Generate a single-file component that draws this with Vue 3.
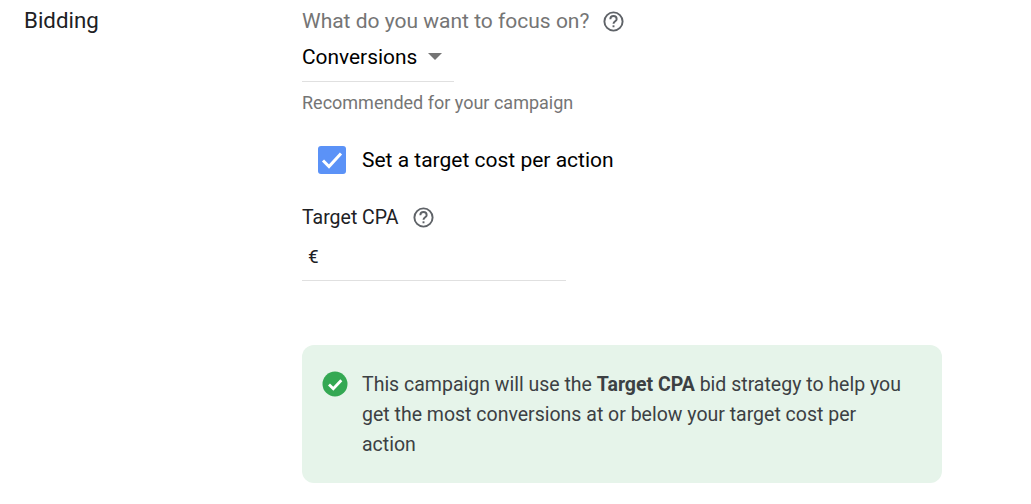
<template>
  <section class="bidding">
    <h2 class="section-title">Bidding</h2>

    <div class="section-body">
      <div class="question">
        <span>What do you want to focus on?</span>
        <svg class="help" viewBox="0 0 24 24">
          <circle cx="12" cy="12" r="9.5" fill="none" stroke="#5f6368" stroke-width="2" />
          <path d="M8.7 9.6a3.3 3.3 0 0 1 6.6 0c0 2.2-3.3 2.3-3.3 4.8" fill="none" stroke="#5f6368" stroke-width="2" />
          <rect x="11" y="16" width="2" height="2" fill="#5f6368" />
        </svg>
      </div>

      <div class="select">
        <span>Conversions</span>
        <i class="caret"></i>
      </div>
      <p class="hint">Recommended for your campaign</p>

      <label class="check-row">
        <span class="checkbox">
          <svg viewBox="0 0 28 28" width="28" height="28">
            <path d="M5 14.5l6 6 12-13" fill="none" stroke="#fff" stroke-width="3" />
          </svg>
        </span>
        <span>Set a target cost per action</span>
      </label>

      <div class="cpa-label">
        <span>Target CPA</span>
        <svg class="help" viewBox="0 0 24 24">
          <circle cx="12" cy="12" r="9.5" fill="none" stroke="#5f6368" stroke-width="2" />
          <path d="M8.7 9.6a3.3 3.3 0 0 1 6.6 0c0 2.2-3.3 2.3-3.3 4.8" fill="none" stroke="#5f6368" stroke-width="2" />
          <rect x="11" y="16" width="2" height="2" fill="#5f6368" />
        </svg>
      </div>
      <div class="cpa-input">€</div>

      <div class="notice">
        <svg class="notice-icon" viewBox="0 0 26 26" width="26" height="26">
          <circle cx="13" cy="13" r="12.5" fill="#34a853" />
          <path d="M7 13.5l4.3 4.3 8-8.6" fill="none" stroke="#fff" stroke-width="2.8" />
        </svg>
        <p>This campaign will use the <strong>Target CPA</strong> bid strategy to help you get the most conversions at or below your target cost per action</p>
      </div>
    </div>
  </section>
</template>

<script setup>
</script>

<style>
html, body {
  background: #fff;
}
</style>

<style scoped>
.bidding {
  display: flex;
  width: 1031px;
  height: 504px;
  overflow: hidden;
  box-sizing: border-box;
  padding: 8px 0 0 24px;
  font-family: Roboto, "Liberation Sans", sans-serif;
  color: #202124;
}

.section-title {
  width: 278px;
  flex-shrink: 0;
  margin: 0;
  font-size: 22.3px;
  font-weight: 400;
  line-height: 25px;
}

.section-body {
  width: 640px;
}

.question {
  display: flex;
  align-items: center;
  gap: 13px;
  height: 26px;
  font-size: 21px;
  color: #757575;
}

.help {
  display: block;
  width: 23px;
  height: 23px;
}

.select {
  display: flex;
  align-items: center;
  gap: 11px;
  width: 152px;
  height: 48px;
  box-sizing: border-box;
  padding-bottom: 2px;
  border-bottom: 1px solid #e0e0e0;
  font-size: 20.9px;
  color: #000;
}

.caret {
  width: 0;
  height: 0;
  border-left: 7px solid transparent;
  border-right: 7px solid transparent;
  border-top: 7px solid #757575;
}

.hint {
  margin: 10px 0 0;
  font-size: 18px;
  line-height: 22px;
  color: #757575;
}

.check-row {
  display: flex;
  align-items: center;
  gap: 16px;
  height: 28px;
  margin: 32px 0 0 16px;
  font-size: 21px;
  color: #000;
}

.checkbox {
  width: 28px;
  height: 28px;
  border-radius: 3px;
  background: #5b92f7;
}

.checkbox svg {
  display: block;
}

.cpa-label {
  display: flex;
  align-items: center;
  gap: 13px;
  height: 24px;
  margin-top: 31px;
  font-size: 19.5px;
}

.cpa-input {
  width: 264px;
  height: 52px;
  box-sizing: border-box;
  padding: 16px 0 0 6px;
  border-bottom: 1px solid #e0e0e0;
  font-size: 19px;
  line-height: 24px;
}

.notice {
  display: flex;
  gap: 14px;
  box-sizing: border-box;
  width: 640px;
  height: 138px;
  margin-top: 64px;
  padding: 25px 40px 0 20px;
  border-radius: 12px;
  background: #e6f4ea;
}

.notice-icon {
  flex-shrink: 0;
  margin-top: 1px;
}

.notice p {
  margin: 0;
  font-size: 19.5px;
  line-height: 30px;
  color: #3c4043;
}

.notice strong {
  font-weight: 700;
}
</style>
